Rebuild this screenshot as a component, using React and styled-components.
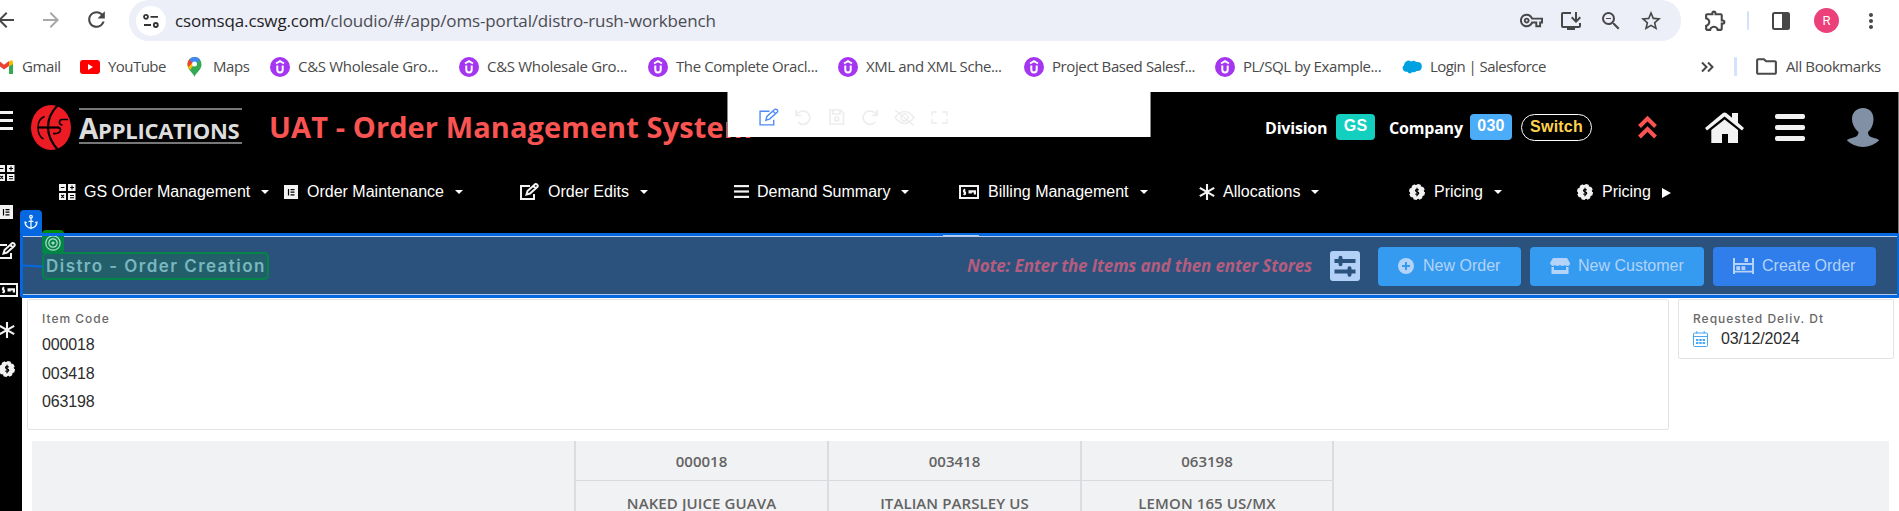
import React from "react";
import styled, { createGlobalStyle } from "styled-components";
import {
  MdArrowBack, MdArrowForward, MdRefresh, MdOutlineVpnKey, MdOutlineInstallDesktop,
  MdZoomOut, MdStarBorder, MdOutlineExtension, MdMoreVert, MdOutlineFolder,
} from "react-icons/md";
import { Anchor } from "lucide-react";

const GlobalStyle = createGlobalStyle`
  * { box-sizing: border-box; }
  body { margin: 0; background: #fff; overflow: hidden; }
  svg { display: block; flex: none; }
`;

const SEGOE = `"Open Sans", "Noto Sans", sans-serif`;
const ARIAL = `"Liberation Sans", Arial, sans-serif`;
const GEO = `Inter, "Open Sans", sans-serif`;

const Page = styled.div`
  width: 1899px;
  height: 511px;
  overflow: hidden;
  display: flex;
  flex-direction: column;
  font-family: ${ARIAL};
`;

/* ---------- browser chrome ---------- */
const Toolbar = styled.div`
  display: flex;
  align-items: center;
  height: 41px;
  flex: none;
  color: #474747;
`;
const NavButtons = styled.div`
  display: flex;
  align-items: center;
  gap: 21px;
  width: 129px;
  height: 40px;
  margin-top: -2px;
  svg:first-child { margin-left: -6px; }
`;
const Omnibox = styled.div`
  display: flex;
  align-items: center;
  width: 1552px;
  height: 41px;
  padding: 0 18px 0 7px;
  border-radius: 20px;
  background: #eceef8;
`;
const SiteInfo = styled.div`
  display: flex;
  align-items: center;
  justify-content: center;
  width: 30px;
  height: 30px;
  margin-right: 9px;
  border-radius: 50%;
  background: #fff;
`;
const Url = styled.div`
  flex: 1;
  font: 400 17px/22px ${SEGOE};
  letter-spacing: -0.15px;
  color: #4a4c52;
  b { font-weight: 400; color: #1f1f1f; }
`;
const OmniActions = styled.div`
  display: flex;
  align-items: center;
  gap: 16px;
`;
const ToolbarEnd = styled.div`
  display: flex;
  align-items: center;
  padding-left: 22px;
`;
const Separator = styled.i`
  width: ${(p) => p.$w || 2}px;
  height: 19px;
  border-radius: 1px;
  background: #d3e3fd;
  margin: ${(p) => p.$m || 0};
`;
const Avatar = styled.div`
  width: 25px;
  height: 25px;
  margin: 0 20px 0 24px;
  border-radius: 50%;
  background: #ec407a;
  color: #fff;
  font: 400 13px/25px Roboto, sans-serif;
  text-align: center;
`;
const BookmarkBar = styled.div`
  display: flex;
  align-items: center;
  height: 51px;
  flex: none;
  color: #4a4a4a;
`;
const Bookmark = styled.div`
  display: flex;
  align-items: center;
  width: ${(p) => p.$w}px;
  flex: none;
  font: 400 15px/20px ${SEGOE};
  letter-spacing: ${(p) => p.$ls || -0.4}px;
  white-space: nowrap;
  svg { margin-right: ${(p) => p.$gap || 8}px; }
  span { padding-bottom: 2px; }
`;

/* ---------- application ---------- */
const Workspace = styled.div`
  display: flex;
  flex: 1;
  min-height: 0;
  position: relative;
`;
const Rail = styled.div`
  display: flex;
  flex-direction: column;
  width: 22px;
  height: 419px;
  background: #000;
  color: #f2f2f2;
  overflow: hidden;
`;
const RailItem = styled.div`
  display: flex;
  align-items: center;
  justify-content: flex-end;
  width: ${(p) => p.$w}px;
  height: ${(p) => p.$h || 39}px;
  padding-bottom: ${(p) => p.$pb || 0}px;
  flex: none;
`;
const Main = styled.div`
  display: flex;
  flex-direction: column;
  width: 1877px;
`;
const Header = styled.div`
  height: 144px;
  flex: none;
  background: #000;
  border-right: 1px solid #777;
  color: #f2f2f2;
`;
const BrandRow = styled.div`
  display: flex;
  align-items: center;
  height: 70px;
  padding-left: 9px;
`;
const Wordmark = styled.div`
  width: 163px;
  height: 36px;
  margin: -2px 27px 0 8px;
  border: solid #777;
  border-width: 2px 0;
  font: 700 22px/36px ${SEGOE};
  letter-spacing: -0.25px;
  color: #ddd;
  white-space: nowrap;
  span { font-size: 28px; }
`;
const Title = styled.div`
  width: 996px;
  font: 700 29px/40px ${SEGOE};
  letter-spacing: 0.1px;
  color: #f95452;
  white-space: nowrap;
`;
const Context = styled.div`
  display: flex;
  align-items: center;
  width: 373px;
  font: 700 16px/24px ${SEGOE};
  letter-spacing: -0.2px;
  color: #fff;
`;
const ContextLabel = styled.span`
  width: ${(p) => p.$w}px;
  padding-top: 2px;
`;
const Badge = styled.span`
  width: ${(p) => p.$w}px;
  height: 26px;
  margin-right: ${(p) => p.$mr}px;
  border-radius: 4px;
  background: ${(p) => p.$bg};
  font: 700 16px/23px ${ARIAL};
  letter-spacing: 0.3px;
  text-align: center;
`;
const SwitchButton = styled.span`
  width: 71px;
  height: 27px;
  border: 1px solid #fff;
  border-radius: 14px;
  color: #ffd24d;
  font: 700 16px/23px ${ARIAL};
  letter-spacing: 0.2px;
  text-align: center;
`;
const HeaderIcons = styled.div`
  display: flex;
  align-items: center;
  svg:nth-child(2) { margin-left: 48px; }
  svg:nth-child(3) { margin-left: 31px; }
  svg:nth-child(4) { margin-left: 42px; }
`;
const MenuBar = styled.div`
  display: flex;
  align-items: center;
  height: 58px;
  padding: 1px 0 0 37px;
`;
const MenuItem = styled.div`
  display: flex;
  align-items: center;
  width: ${(p) => p.$w}px;
  flex: none;
  font: 400 16px/20px ${ARIAL};
  color: #fff;
  white-space: nowrap;
`;
const MenuIcon = styled.span`
  width: ${(p) => p.$w}px;
  color: #f2f2f2;
`;
const Caret = styled.i`
  margin: 1px 0 0 11px;
  border: 4px solid transparent;
  border-top-color: #fff;
  border-bottom: 0;
`;
const CaretRight = styled.i`
  margin: 3px 0 0 11px;
  border: 5px solid transparent;
  border-left: 9px solid #fff;
  border-right: 0;
`;
const EditorBar = styled.div`
  position: absolute;
  left: 727px;
  top: 0;
  display: flex;
  align-items: center;
  width: 424px;
  height: 45px;
  padding: 5px 0 0 31px;
  border: solid #888;
  border-width: 0 1px;
  background: #fff;
  color: #ededed;
  svg:first-child { color: #4c8bf5; }
  svg:nth-child(n + 2) { margin-left: 16px; }
`;

/* ---------- selected title band ---------- */
const Band = styled.div`
  position: relative;
  display: flex;
  align-items: center;
  height: 59px;
  flex: none;
  padding: 1px 22px 0 20px;
  border: 1px solid #b3cdf0;
  background: #2b527d;
`;
const SelectionFrame = styled.div`
  position: absolute;
  inset: -4px -2px -4px -3px;
  border: 3px solid #0668e1;
  border-radius: 3px;
`;
const HandleMark = styled.i`
  position: absolute;
  left: 920px;
  top: -2px;
  width: 36px;
  height: 2px;
  background: #b3cdf0;
`;
const AnchorTab = styled.div`
  position: absolute;
  left: -3px;
  top: -27px;
  display: flex;
  align-items: center;
  justify-content: center;
  width: 22px;
  height: 24px;
  border-radius: 4px 4px 0 0;
  background: #0668e1;
  color: #e8f2ff;
`;
const TargetTab = styled.div`
  position: absolute;
  left: 19px;
  top: -7px;
  display: flex;
  align-items: center;
  justify-content: center;
  width: 22px;
  height: 23px;
  border-radius: 4px 4px 0 0;
  border-top: 3px solid #008a10;
  background: #038545;
  color: #b4dcd0;
`;
const Connector = styled.i`
  position: absolute;
  left: 0;
  top: 28px;
  width: 20px;
  height: 2px;
  background: #0668e1;
  transform: rotate(3deg);
`;
const BandTitle = styled.div`
  width: 227px;
  height: 28px;
  margin-right: 698px;
  margin-left: -1px;
  padding-left: 2px;
  border: 2px solid #038549;
  border-radius: 5px;
  background: #235f6a;
  color: #79b7c0;
  font: 600 17px/25px ${GEO};
  letter-spacing: 1.45px;
  white-space: nowrap;
`;
const Note = styled.div`
  width: 363px;
  font: italic 700 17px/22px ${SEGOE};
  letter-spacing: -0.15px;
  color: #b45d7e;
  white-space: nowrap;
`;
const Actions = styled.div`
  display: flex;
  gap: 9px;
  margin-left: 18px;
`;
const Button = styled.div`
  display: flex;
  align-items: center;
  width: ${(p) => p.$w}px;
  height: 39px;
  padding-left: 20px;
  border-radius: 4px;
  background: ${(p) => (p.$primary ? "#307dec" : "#359bf0")};
  color: #b3d3f8;
  font: 400 16px/20px ${ARIAL};
  white-space: nowrap;
  svg { margin-right: ${(p) => p.$gap || 8}px; }
`;

/* ---------- content ---------- */
const Cards = styled.div`
  display: flex;
  align-items: flex-start;
  gap: 9px;
  padding: 4px 0 0 5px;
`;
const Card = styled.div`
  width: ${(p) => p.$w}px;
  height: ${(p) => p.$h}px;
  padding: 10px 14px 0;
  border: 1px solid #e3e3e3;
  border-radius: 2px;
`;
const FieldLabel = styled.div`
  margin-bottom: 1px;
  font: 500 12px/17px ${GEO};
  letter-spacing: ${(p) => p.$ls}px;
  color: #686868;
  white-space: nowrap;
`;
const ItemCode = styled.div`
  height: 28.7px;
  padding-top: 7px;
  font: 400 16px/20px ${ARIAL};
  letter-spacing: -0.15px;
  color: #2c2c2c;
`;
const DateField = styled.div`
  display: flex;
  align-items: center;
  gap: 13px;
  margin-top: 1px;
  font: 400 16px/22px ${ARIAL};
  letter-spacing: -0.15px;
  color: #2c2c2c;
`;
const Table = styled.div`
  display: grid;
  grid-template-columns: 544px 253px 253px 252px 555px;
  width: 1857px;
  height: 70px;
  margin: 11px 0 0 10px;
  background: #f1f2f4;
`;
const Column = styled.div`
  border-right: ${(p) => (p.$last ? "0" : "2px")} solid #dadce2;
`;
const ColumnCode = styled.div`
  height: 40px;
  border-bottom: 1px solid #d8dade;
  font: 600 15px/41px ${SEGOE};
  color: #636363;
  text-align: center;
`;
const ColumnName = styled.div`
  height: 30px;
  padding-top: 12px;
  font: 600 15px/20px ${SEGOE};
  letter-spacing: 0.1px;
  color: #636363;
  text-align: center;
  white-space: nowrap;
`;

/* ---------- drawings ---------- */
const TuneIcon = () => (
  <svg width="16" height="16" viewBox="0 0 16 16" fill="none" stroke="#333" strokeWidth="1.8">
    <circle cx="3" cy="3.8" r="2" /><path d="M7.5 3.8H15M1 12H8" /><circle cx="12.8" cy="12" r="2" />
  </svg>
);
const SidePanelIcon = () => (
  <svg width="18" height="18" viewBox="0 0 18 18">
    <rect x="1" y="1" width="16" height="16" rx="1.5" fill="none" stroke="#474747" strokeWidth="2" />
    <path d="M10 1h7v16h-7z" fill="#474747" />
  </svg>
);
const GmailIcon = () => (
  <svg width="14" height="14" viewBox="0 0 14 14">
    <path d="M0 1.500l4 3.200 5-3.700v5L4 9.500 0 6.500z" fill="#ea4335" />
    <path d="M9 4.500v9.500h4V2.500z" fill="#34a853" /><path d="M9 1.500Q12.500-1 13 2v2L9 6.500z" fill="#fbbc04" />
  </svg>
);
const YoutubeIcon = () => (
  <svg width="20" height="14" viewBox="0 0 20 14">
    <rect width="20" height="14" rx="3" fill="#f00" /><path d="M8 4l5 3-5 3z" fill="#fff" />
  </svg>
);
const MapsIcon = () => (
  <svg width="15" height="20" viewBox="0 0 15 20">
    <path d="M7.5 20C6.8 16 0 13 0.5 7A7 7 0 0 1 14.5 7C15 13 8.2 16 7.5 20z" fill="#34a853" />
    <path d="M.5 7A7 7 0 0 1 2.3 2.3L7.5 7 3 13Q.3 10 .5 7z" fill="#fbbc04" />
    <path d="M.6 6A7 7 0 0 1 2.5 2.2L6 5 1.5 10Q.4 8 .6 6z" fill="#ea4335" />
    <path d="M2.4 2.3A7 7 0 0 1 13 2.5L7.5 8.500z" fill="#4285f4" />
    <circle cx="7.5" cy="7" r="2.5" fill="#fff" />
  </svg>
);
const UdemyIcon = () => (
  <svg width="20" height="20" viewBox="0 0 20 20">
    <circle cx="10" cy="10" r="10" fill="#a435f0" />
    <path d="M6 6.500L10 4.200l4 2.300M7.300 8.500v4.300a2.700 2.700 0 0 0 5.400 0V8.500" fill="none" stroke="#fff" strokeWidth="2" />
  </svg>
);
const SalesforceIcon = () => (
  <svg width="20" height="14" viewBox="0 0 20 14">
    <path d="M3 2.500Q6-.8 9 1.500q3.500-2 5 .6Q20 1.500 19.800 6.500T14.500 11q-2 2-4 1-3 3-5-.2Q1.500 12 .8 9T2 5.500Q2 4 3 2.500z" fill="#00a1e0" />
  </svg>
);
const ChevronsIcon = () => (
  <svg width="33" height="12" viewBox="0 0 33 12" fill="none" stroke="#474747" strokeWidth="2">
    <path d="M1 1.500L5.500 6 1 10.500M7 1.500L11.500 6 7 10.500" />
  </svg>
);
const LogoIcon = () => (
  <svg width="40" height="45" viewBox="0 0 40 45">
    <ellipse cx="20" cy="22.500" rx="20" ry="22.500" fill="#ed1c24" />
    <path d="M27 0Q17 10 17 22T27 45" fill="none" stroke="#000" strokeWidth="2.200" />
    <path d="M13.500 11.500Q7 14 7 22.500T12.500 34" fill="none" stroke="#000" strokeWidth="1.500" />
    <path d="M7 22.500H28" stroke="#000" strokeWidth="2.200" />
    <path d="M37 14.500H31Q28.500 14.500 28.500 17.200T31.500 20M22 28.500Q29 29 29.500 25Q29.500 22.500 27 22.500" fill="none" stroke="#000" strokeWidth="1.700" />
  </svg>
);
const BarsIcon = ({ w = 15, h = 13, t = 2.2, r = 0 }) => (
  <svg width={w} height={h} viewBox={`0 0 ${w} ${h}`} fill="currentColor">
    <rect width={w} height={t} rx={r} />
    <rect y={(h - t) / 2} width={w} height={t} rx={r} />
    <rect y={h - t} width={w} height={t} rx={r} />
  </svg>
);
const CalcIcon = () => (
  <svg width="17" height="16" viewBox="0 0 17 16">
    <path d="M0 0h7v7H0zM9 0h7.500v7H9zM0 9h7v7H0zM9 9h7.500v7H9z" fill="currentColor" />
    <path d="M1.800 3.500h3.600M11 3.500h4M13 1.500v4M2.200 11l2.800 2.800M5 11l-2.800 2.800M11 11.500h4M11 13.700h4" stroke="#000" strokeWidth="1.100" />
  </svg>
);
const ListBoxIcon = () => (
  <svg width="14" height="14" viewBox="0 0 14 14">
    <rect width="14" height="14" fill="currentColor" />
    <path d="M4.500 4v6.500M6.500 4.600h4M6.500 7.200h4M6.500 9.800h4" stroke="#000" strokeWidth="1.200" />
  </svg>
);
const EditIcon = ({ w = 19, sw = 2 }) => (
  <svg width={w} height={w * 0.9} viewBox="0 0 19 17" fill="none" stroke="currentColor" strokeWidth={sw}>
    <path d="M10 3H1v13h13v-5" />
    <path d="M6.500 11.500l1-3.500L15 1.200q1.200-.6 2.200.4t.3 2.100L10 10.500zM13.300 3l2.500 2.500" />
  </svg>
);
const CheckCardIcon = () => (
  <svg width="20" height="14" viewBox="0 0 20 14">
    <rect x="1" y="1" width="18" height="12" fill="none" stroke="currentColor" strokeWidth="2" />
    <path d="M6.500 5H4.500v2h2v2.200H4M5.500 3.800v6.400" fill="none" stroke="currentColor" strokeWidth="1.100" />
    <path d="M9.500 5.200H17V9.500h-2.200V7.500h-2V8.500H9.500z" fill="currentColor" />
  </svg>
);
const AsteriskIcon = () => (
  <svg width="16" height="16" viewBox="0 0 16 16" stroke="currentColor" strokeWidth="2.100">
    <path d="M8 0v16M.8 3.800l14.400 8.400M15.200 3.800L.8 12.200" />
  </svg>
);
const DollarBadgeIcon = () => (
  <svg width="16" height="16" viewBox="0 0 16 16">
    <circle cx="8" cy="8" r="7.200" fill="currentColor" />
    <circle cx="8" cy="8" r="7" fill="none" stroke="currentColor" strokeWidth="2" strokeDasharray="3.500 2" />
    <path d="M9.800 6Q6.500 4.700 6.500 6.500q.1 1 1.700 1.400 1.700.5 1.500 1.600Q9 11 6.300 10M8 3.800v8.400" fill="none" stroke="#000" strokeWidth="1.200" />
  </svg>
);
const UndoIcon = ({ flip }) => (
  <svg width="17" height="17" viewBox="0 0 17 17" fill="none" stroke="currentColor" strokeWidth="1.700">
    <path transform={flip ? "translate(17 0) scale(-1 1)" : undefined} d="M1 1v5.500h5.500M1.500 6Q4 2 8.500 2a6.700 6.700 0 1 1-5.500 11" />
  </svg>
);
const SaveIcon = () => (
  <svg width="17" height="16" viewBox="0 0 17 16" fill="none" stroke="currentColor" strokeWidth="1.700">
    <path d="M2 1h10.500L15.500 4v11H2zM5 1v4h7V1" /><circle cx="8.700" cy="10" r="2" />
  </svg>
);
const EyeOffIcon = () => (
  <svg width="21" height="17" viewBox="0 0 21 17" fill="none" stroke="currentColor" strokeWidth="1.500">
    <path d="M1 8.500Q10.500-3.500 20 8.500 10.500 20.500 1 8.500zM1 1l19 15.500" /><circle cx="10.500" cy="8.500" r="3.500" />
  </svg>
);
const ExpandIcon = () => (
  <svg width="17" height="13" viewBox="0 0 17 13" fill="none" stroke="currentColor" strokeWidth="1.400">
    <path d="M1 5V1h5M11 1h5v4M1 8v4h5M16 8v4h-5" />
  </svg>
);
const DoubleUpIcon = () => (
  <svg width="19" height="24" viewBox="0 0 19 24" fill="none" stroke="#f95452" strokeWidth="4">
    <path d="M1.500 11.500l8-8 8 8M1.500 22l8-8 8 8" />
  </svg>
);
const HomeIcon = () => (
  <svg width="39" height="31" viewBox="0 0 39 31">
    <path d="M0 16L17.600 1.200q2-1.500 4 0L27 5.700V1h6v9.700L39 16l-2 2.400L19.600 4.500 2 18.400z" fill="currentColor" />
    <path d="M6.300 18L19.600 7.500 33 18v13H23v-9h-6v9H6.300z" fill="currentColor" />
  </svg>
);
const PersonIcon = () => (
  <svg width="32" height="39" viewBox="0 0 32 39">
    <path d="M16 0C9 0 5 5 5 11c0 5 3 10 6.500 13 0 4-3 5-6.500 6-3 .8-5 1.500-5 2.500Q7 39 16 39t16-6.500c0-1-2-1.700-5-2.500-3.500-1-6-2-6-6 3.500-3 5.500-8 5.500-13C26.500 5 23 0 16 0z" fill="#8190a5" />
  </svg>
);
const TargetIcon = () => (
  <svg width="16" height="16" viewBox="0 0 16 16" fill="none" stroke="currentColor" strokeWidth="1.200">
    <circle cx="8" cy="8" r="7.200" /><circle cx="8" cy="8" r="4.200" /><circle cx="8" cy="8" r="1" fill="currentColor" />
  </svg>
);
const SlidersIcon = () => (
  <svg width="30" height="30" viewBox="0 0 30 30">
    <rect width="30" height="30" rx="3" fill="#b3d1f7" />
    <path d="M4.500 10h21M4.500 20.500h21" stroke="#2b527d" strokeWidth="4" />
    <path d="M10.500 6.800v6.400M19.500 17.300v6.400" stroke="#2b527d" strokeWidth="4" strokeLinecap="round" />
  </svg>
);
const PlusCircleIcon = () => (
  <svg width="16" height="16" viewBox="0 0 16 16">
    <circle cx="8" cy="8" r="8" fill="currentColor" /><path d="M8 4v8M4 8h8" stroke="#359bf0" strokeWidth="2" />
  </svg>
);
const StoreIcon = () => (
  <svg width="20" height="16" viewBox="0 0 20 16" fill="currentColor">
    <path d="M3 0h14l3 5q0 3-2.500 3t-2.500-1q-1 1-2.500 1T10 7Q9 8 7.500 8T5 7q-1 1-2.500 1T0 5zM1.500 9h2.500v3h12V9h2.500v7h-17z" />
  </svg>
);
const ShelvesIcon = () => (
  <svg width="21" height="16" viewBox="0 0 21 16" fill="currentColor">
    <path d="M0 0h2v5h17V0h2v16h-2v-1.500H2V16H0zM2 7v5.700h17V7z" fillRule="evenodd" />
    <path d="M11.500 0H15v4h-3.500zM3.300 8.200h3.800V12H3.300zM8.500 8.200h3.800V12H8.500z" />
  </svg>
);
const CalendarIcon = () => (
  <svg width="15" height="16" viewBox="0 0 15 16" fill="none" stroke="#45a7f5">
    <rect x=".5" y="2" width="14" height="13.500" rx="1" /><path d="M.5 5.500h14M3.800 0v2.500M11.200 0v2.500" />
    <path d="M3 9h9M3 12h9" strokeWidth="1.800" strokeDasharray="2.400 .9" />
  </svg>
);

const udemy = [
  ["C&S Wholesale Gro...", 189, -0.3], ["C&S Wholesale Gro...", 189, -0.3],
  ["The Complete Oracl...", 190], ["XML and XML Sche...", 186],
  ["Project Based Salesf...", 191], ["PL/SQL by Example...", 187],
];
const menus = [
  ["GS Order Management", CalcIcon, 25, 225], ["Order Maintenance", ListBoxIcon, 23, 236],
  ["Order Edits", EditIcon, 28, 214], ["Demand Summary", BarsIcon, 23, 225],
  ["Billing Management", CheckCardIcon, 29, 240], ["Allocations", AsteriskIcon, 24, 210],
  ["Pricing", DollarBadgeIcon, 25, 168], ["Pricing", DollarBadgeIcon, 25, 120],
];
const items = [
  ["000018", "NAKED JUICE GUAVA"], ["003418", "ITALIAN PARSLEY US"], ["063198", "LEMON 165 US/MX"],
];

export default function App() {
  return (
    <Page>
      <GlobalStyle />
      <Toolbar>
        <NavButtons>
          <MdArrowBack size={24} /><MdArrowForward size={24} color="#a8a8a8" /><MdRefresh size={25} />
        </NavButtons>
        <Omnibox>
          <SiteInfo><TuneIcon /></SiteInfo>
          <Url><b>csomsqa.cswg.com</b>/cloudio/#/app/oms-portal/distro-rush-workbench</Url>
          <OmniActions>
            <MdOutlineVpnKey size={23} /><MdOutlineInstallDesktop size={24} />
            <MdZoomOut size={24} /><MdStarBorder size={24} />
          </OmniActions>
        </Omnibox>
        <ToolbarEnd>
          <MdOutlineExtension size={25} />
          <Separator $m="0 23px 0 19px" />
          <SidePanelIcon />
          <Avatar>R</Avatar>
          <MdMoreVert size={24} />
        </ToolbarEnd>
      </Toolbar>
      <BookmarkBar>
        <Bookmark $w={80}><GmailIcon /><span>Gmail</span></Bookmark>
        <Bookmark $w={107} $ls={-0.55}><YoutubeIcon /><span>YouTube</span></Bookmark>
        <Bookmark $w={83} $gap={11}><MapsIcon /><span>Maps</span></Bookmark>
        {udemy.map(([label, w, ls], i) => (
          <Bookmark key={i} $w={w} $ls={ls}><UdemyIcon /><span>{label}</span></Bookmark>
        ))}
        <Bookmark $w={299} $ls={-0.55}><SalesforceIcon /><span>Login | Salesforce</span></Bookmark>
        <ChevronsIcon />
        <Separator $w={3} $m="0 17px 0 0" />
        <Bookmark $w={130} $gap={7}><MdOutlineFolder size={25} /><span>All Bookmarks</span></Bookmark>
      </BookmarkBar>

      <Workspace>
        <Rail>
          <RailItem $w={13} $h={61} $pb={4}><BarsIcon w={18} h={19} t={3} /></RailItem>
          <RailItem $w={15}><CalcIcon /></RailItem>
          <RailItem $w={13}><ListBoxIcon /></RailItem>
          <RailItem $w={16}><EditIcon /></RailItem>
          <RailItem $w={18} $h={40}><CheckCardIcon /></RailItem>
          <RailItem $w={15}><AsteriskIcon /></RailItem>
          <RailItem $w={15}><DollarBadgeIcon /></RailItem>
        </Rail>
        <Main>
          <Header>
            <BrandRow>
              <LogoIcon />
              <Wordmark><span>A</span>PPLICATIONS</Wordmark>
              <Title>UAT - Order Management System</Title>
              <Context>
                <ContextLabel $w={71}>Division</ContextLabel>
                <Badge $w={39} $mr={14} $bg="#13cfbf">GS</Badge>
                <ContextLabel $w={81}>Company</ContextLabel>
                <Badge $w={42} $mr={9} $bg="#4bacf7">030</Badge>
                <SwitchButton>Switch</SwitchButton>
              </Context>
              <HeaderIcons>
                <DoubleUpIcon /><HomeIcon /><BarsIcon w={30} h={27} t={5} r={2} /><PersonIcon />
              </HeaderIcons>
            </BrandRow>
            <MenuBar>
              {menus.map(([label, Icon, iw, w], i) => (
                <MenuItem key={i} $w={w}>
                  <MenuIcon $w={iw}><Icon /></MenuIcon>
                  {label}
                  {i === menus.length - 1 ? <CaretRight /> : <Caret />}
                </MenuItem>
              ))}
            </MenuBar>
          </Header>
          <Band>
            <BandTitle>Distro - Order Creation</BandTitle>
            <Note>Note: Enter the Items and then enter Stores</Note>
            <SlidersIcon />
            <Actions>
              <Button $w={143} $gap={9}><PlusCircleIcon />New Order</Button>
              <Button $w={174}><StoreIcon />New Customer</Button>
              <Button $w={163} $primary><ShelvesIcon />Create Order</Button>
            </Actions>
            <TargetTab><TargetIcon /></TargetTab>
            <SelectionFrame />
            <HandleMark />
            <AnchorTab><Anchor size={16} strokeWidth={2} /></AnchorTab>
            <Connector />
          </Band>
          <Cards>
            <Card $w={1642} $h={131}>
              <FieldLabel $ls={1}>Item Code</FieldLabel>
              {items.map(([code]) => <ItemCode key={code}>{code}</ItemCode>)}
            </Card>
            <Card $w={216} $h={60}>
              <FieldLabel $ls={1}>Requested Deliv. Dt</FieldLabel>
              <DateField><CalendarIcon />03/12/2024</DateField>
            </Card>
          </Cards>
          <Table>
            <Column />
            {items.map(([code, name]) => (
              <Column key={code}>
                <ColumnCode>{code}</ColumnCode>
                <ColumnName>{name}</ColumnName>
              </Column>
            ))}
            <Column $last />
          </Table>
        </Main>
        <EditorBar>
          <EditIcon w={20} sw={1.3} />
          <UndoIcon /><SaveIcon /><UndoIcon flip /><EyeOffIcon /><ExpandIcon />
        </EditorBar>
      </Workspace>
    </Page>
  );
}
